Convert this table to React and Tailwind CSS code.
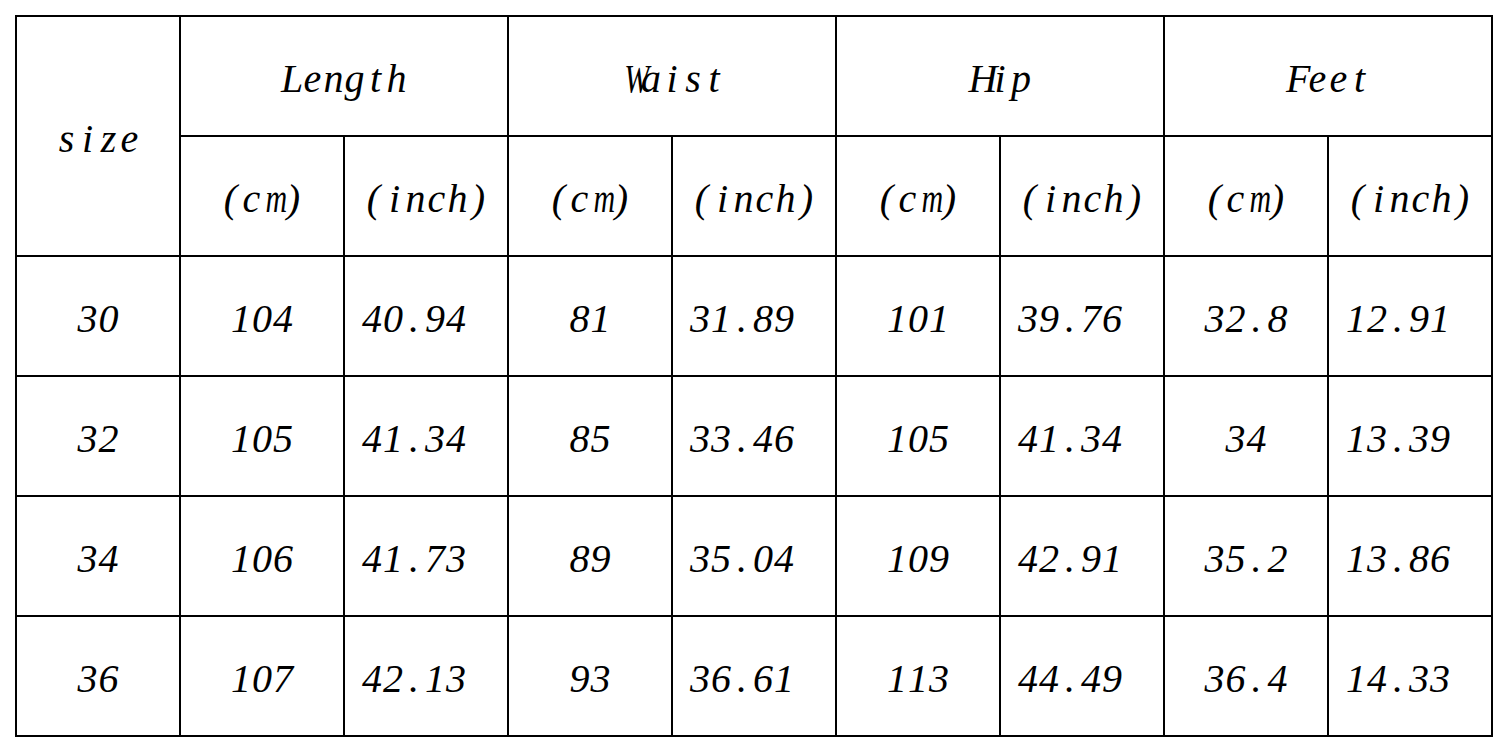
const groups = ['Length', 'Waist', 'Hip', 'Feet'];

const rows = [
  ['30', '104', '40.94', '81', '31.89', '101', '39.76', '32.8', '12.91'],
  ['32', '105', '41.34', '85', '33.46', '105', '41.34', '34', '13.39'],
  ['34', '106', '41.73', '89', '35.04', '109', '42.91', '35.2', '13.86'],
  ['36', '107', '42.13', '93', '36.61', '113', '44.49', '36.4', '14.33'],
];

const WIDE = 'mMwW';

// the sheet uses a fixed-pitch italic, so every glyph gets the same slot
const Mono = ({ text }) => (
  <span className="inline-flex font-['Liberation_Serif'] italic text-[40px] leading-none text-black">
    {text.split('').map((ch, i) => (
      <span key={i} className="inline-block w-[21px] text-center">
        {WIDE.includes(ch) ? <span className="inline-block scale-x-[0.75]">{ch}</span> : ch}
      </span>
    ))}
  </span>
);

const Cell = ({ text, className = '' }) => (
  <div className={`bg-white flex items-center justify-center pt-[6px] ${className}`}>
    <Mono text={text} />
  </div>
);

export default function App() {
  return (
    <div className="bg-white min-h-[752px] pt-[15px] pl-[15px]">
      <div className="grid grid-cols-[repeat(9,162px)] grid-rows-[repeat(6,118px)] gap-[2px] p-[2px] bg-black w-fit">
        <Cell text="size" className="row-span-2" />
        {groups.map((g) => (
          <Cell key={g} text={g} className="col-span-2" />
        ))}
        {groups.map((g) => [
          <Cell key={`${g}-cm`} text="(cm)" />,
          <Cell key={`${g}-in`} text="(inch)" />,
        ])}
        {rows.map((row) =>
          row.map((v, i) => (
            <Cell key={`${row[0]}-${i}`} text={v} className={i > 0 && i % 2 === 0 ? 'pr-6' : ''} />
          ))
        )}
      </div>
    </div>
  );
}
